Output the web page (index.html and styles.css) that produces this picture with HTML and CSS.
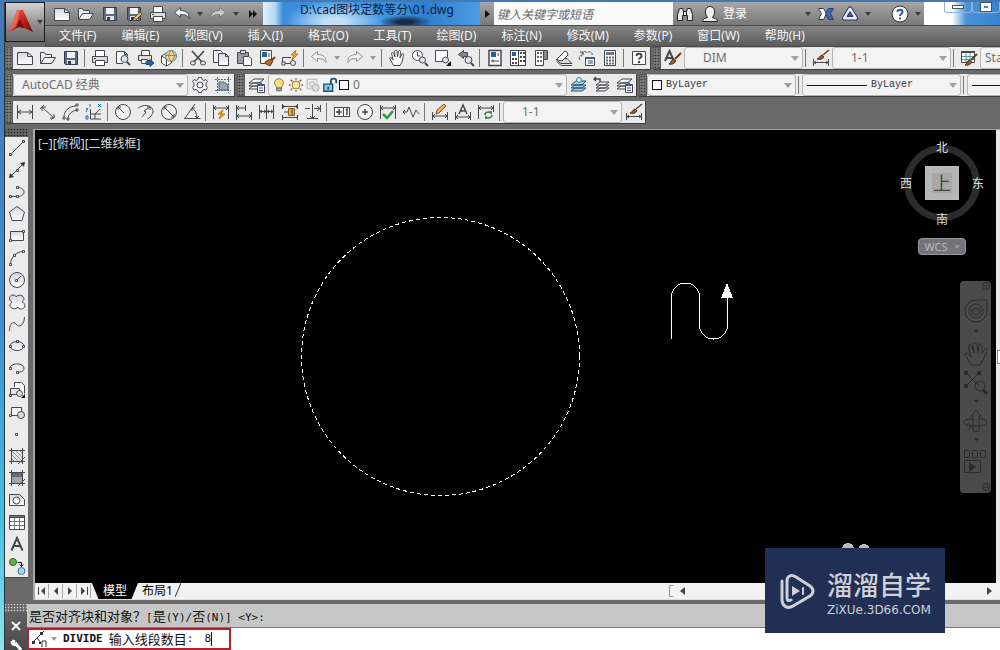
FILE: index.html
```html
<!DOCTYPE html>
<html lang="zh-CN">
<head>
<meta charset="utf-8">
<title>01.dwg</title>
<link rel="stylesheet" href="styles.css">
</head>
<body>
<svg class="defs" aria-hidden="true">
  <defs>
    <linearGradient id="g-red" x1="0" y1="0" x2="1" y2="1"><stop offset="0" stop-color="#f0705a"/><stop offset=".5" stop-color="#c8251c"/><stop offset="1" stop-color="#7c0d0a"/></linearGradient>
    <linearGradient id="g-paper" x1="0" y1="0" x2="0" y2="1"><stop offset="0" stop-color="#d4d7de"/><stop offset="1" stop-color="#ffffff"/></linearGradient>
    <symbol id="new" viewBox="0 0 18 18"><path fill="url(#g-paper)" d="M1.500 3.500h10l5 4v8h-15z"/><path d="M11.500 3.500v4h5"/></symbol>
    <symbol id="open" viewBox="0 0 18 18"><path fill="#eceef2" d="M1.500 14.500v-11h4l1 2h6v3M1.500 14.500l4-6h11l-4 6z"/></symbol>
    <symbol id="save" viewBox="0 0 18 18"><path fill="#5c6780" stroke="#333c50" d="M2.500 2.500h13v13h-12l-1-1z"/><path fill="#f4f4f4" stroke="none" d="M5 3h8v6H5z"/><path fill="#dfe3ea" stroke="none" d="M5 11h8v4H5z"/><path fill="#333c50" stroke="none" d="M6 12h3v3H6z"/></symbol>
    <symbol id="saveas" viewBox="0 0 18 18"><use href="#save"/><path fill="#e9b256" stroke="#6b4a1c" d="M8 16l1-3 6-6 2 2-6 6z"/></symbol>
    <symbol id="print" viewBox="0 0 18 18"><path fill="#fff" d="M4.500 7.500v-6h9v6"/><path fill="#d9dbe0" d="M1.500 7.500h15v6h-15z"/><path fill="#fff" d="M4.500 11.500h9v5h-9z"/><path d="M3 9.500h2"/></symbol>
    <symbol id="preview" viewBox="0 0 18 18"><path fill="#fff" d="M9 14.500H2.500v-12h8l3 3V7"/><path d="M10.500 2.500v3h3"/><circle cx="10.500" cy="10" r="3.500" fill="#dce6ee"/><path stroke-width="2" d="M13 13l3 3"/></symbol>
    <symbol id="publish" viewBox="0 0 18 18"><path fill="#fff" d="M4.500 6.500v-5h8v5"/><path fill="#d9dbe0" d="M1.500 6.500h13v5h-13z"/><path fill="#fff" d="M4.500 10.500h6v4h-6z"/><path fill="#1b66a8" stroke="#1b4f80" d="M9 12.500h4v-2l4 3.500-4 3.500v-2H9z"/></symbol>
    <symbol id="web" viewBox="0 0 18 18"><path fill="#fff" d="M1.500 7l5-3 5 3v7l-5 3-5-3zM1.500 7l5 3v7"/><circle cx="11" cy="7" r="5.500" fill="#f0d9a0" stroke="#57906a"/><path stroke="#c0763a" d="M11 2c-3 3-3 7 0 10M6 6.500h10"/><path stroke="#57906a" d="M12 2c3 3 3 7 0 10"/></symbol>
    <symbol id="cut" viewBox="0 0 18 18"><path stroke-width="1.600" d="M3 2l10 11M15 2L5 13"/><ellipse cx="4" cy="14" rx="2.500" ry="2"/><ellipse cx="14" cy="14" rx="2.500" ry="2"/></symbol>
    <symbol id="copy" viewBox="0 0 18 18"><path fill="#f4f4f4" d="M6 13.500H1.500v-12h7l2 2"/><path fill="url(#g-paper)" d="M6.500 4.500h7l3 3v9h-10z"/><path d="M13.500 4.500v3h3"/></symbol>
    <symbol id="paste" viewBox="0 0 18 18"><path fill="#9c9da3" d="M2.500 3.500h11v11h-11z"/><path fill="#ddd" d="M5.500 1.500h5v3h-5z"/><path fill="#fff" d="M8.500 7.500h5l3 2v7h-8z"/></symbol>
    <symbol id="match" viewBox="0 0 18 18"><path fill="#fff" d="M2.500 1.500h11v13h-11z"/><path fill="#29609b" stroke="none" d="M4 3h5v5H4z"/><path d="M11 4v4"/><path fill="#b86b25" stroke="#6d3c12" d="M7 13l5-3 3 2-3 5-4-2z"/><path stroke="#7a4418" stroke-width="2" d="M14 11l3-3"/></symbol>
    <symbol id="block" viewBox="0 0 18 18"><path d="M1.500 8.500H10M1.500 8.500v6h8"/><path fill="#fff" d="M1 13h3v3H1z"/><circle cx="12" cy="14" r="2.500"/><path fill="#f1a82e" stroke="#c97a10" d="M15 1l-5 5h3l-2 5 6-6h-3z"/></symbol>
    <symbol id="undo" viewBox="0 0 18 18"><path fill="#f3f3f3" d="M1.500 7.500l6-5v3c6 0 9 3 8.500 8-1.500-3-4-4-8.500-4v3z"/></symbol>
    <symbol id="redo" viewBox="0 0 18 18"><path fill="#f3f3f3" d="M16.500 7.500l-6-5v3c-6 0-9 3-8.500 8 1.500-3 4-4 8.500-4v3z"/></symbol>
    <symbol id="hand" viewBox="0 0 18 18"><path fill="#fff" d="M5.500 16.500L1.500 9c1-1 2-.5 3.500 2L3.500 4c1-1 2-.5 2.500 1l1 3-.500-6c1-1 2-1 2.500 0l.5 6 1-6c1-1 2 0 2 1l-.5 6 2-4c1-1 2 0 1.500 1.500L14 13l-2 3.500z"/></symbol>
    <symbol id="zoomrt" viewBox="0 0 18 18"><circle cx="6.500" cy="6.500" r="5" fill="#fff"/><path d="M6.500 3v4h3"/><circle cx="11.500" cy="11" r="3" fill="#e2e8ee"/><path stroke-width="2" d="M14 14l3 3"/></symbol>
    <symbol id="zoomwin" viewBox="0 0 18 18"><path fill="#fff" d="M1.500 1.500h12v11h-12z"/><circle cx="11.500" cy="11" r="3" fill="#dce3ea"/><path d="M14 14l2 2"/><path fill="#111" stroke="none" d="M17 12v5h-5z"/></symbol>
    <symbol id="zoomprev" viewBox="0 0 18 18"><path fill="#888" d="M1.500 5.500l5-4v2h4v4h-4v2z"/><circle cx="11.500" cy="11" r="3.500" fill="#dce3ea"/><path stroke-width="2" d="M14 14l3 3"/></symbol>
    <symbol id="props" viewBox="0 0 18 18"><path fill="#fff" stroke-width="1.500" d="M3 1.500h12v15H3z"/><path fill="#29609b" stroke="none" d="M5 3h5v5H5z"/><path d="M5 12h8M7 10.500v3M12 4v3"/></symbol>
    <symbol id="center" viewBox="0 0 18 18"><path fill="#fff" d="M1.500 1.500h15v15h-15z"/><path fill="#29609b" stroke="none" d="M3 3h4v4H3z"/><path stroke-width="2" stroke-dasharray="2 1" d="M3 10h5M3 14h5M11 4h5M11 8h5M11 12h5"/><path d="M9.500 2v14"/></symbol>
    <symbol id="palette" viewBox="0 0 18 18"><path fill="#fff" d="M3.500 1.500h8v15h-8z"/><path fill="#888" d="M11.500 1.500h4v9h-4z"/><path stroke="#666" stroke-width="2" stroke-dasharray="2 1" d="M5 4h5M5 8h5M5 12h5"/></symbol>
    <symbol id="sheets" viewBox="0 0 18 18"><path fill="#ddd" d="M1 10.500l5 4h11l-5-5z"/><path fill="#fff" d="M2 10l8-8 2 1 1 3-6 6-4-1z"/><path d="M2 12.500l4 4h11"/></symbol>
    <symbol id="markup" viewBox="0 0 18 18"><path stroke-dasharray="3 1" d="M2 11c-2-3 0-5 2-4-1-4 3-6 5-3 3-3 6 0 5 2"/><path fill="#fff" d="M7.500 8.500h9v8h-9z"/><path stroke="#29609b" stroke-width="2" d="M8 9h8"/><path d="M10 12h5M10 14h5M2 3h3v3"/></symbol>
    <symbol id="calc" viewBox="0 0 18 18"><path fill="#fff" d="M3.500 1.500h11v15h-11z"/><path fill="#6b7688" stroke="none" d="M5 3h8v3H5z"/><path stroke="#666" stroke-width="2" stroke-dasharray="2 1" d="M5 8.500h8M5 11.500h8M5 14.500h8"/></symbol>
    <symbol id="help" viewBox="0 0 18 18"><path fill="#fff" d="M2.500 2.500h13v13h-13z"/><path stroke-width="2" d="M6.500 7c0-3 5-3 5 0 0 2-2.500 2-2.500 3.500M9 12v2"/></symbol>
    <symbol id="brush" viewBox="0 0 18 18"><path fill="#9c5a2c" stroke="#5c3010" d="M5 15c2-1 2-4 4-5l3 2c-1 2-4 4-7 3z"/><path stroke="#6d3c12" stroke-width="2" d="M11 10l6-6"/></symbol>
    <symbol id="txtstyle" viewBox="0 0 18 18"><path stroke-width="2" d="M1 12L5.500 2 10 12M3 9h5"/><use href="#brush"/></symbol>
    <symbol id="dimstyle" viewBox="0 0 18 18"><path d="M1.500 10v7M16.500 10v7M2 13.500h14M4 12l-2 1.500L4 15M14 12l2 1.500-2 1.500"/><path fill="#9c5a2c" stroke="#5c3010" d="M5 10c2 0 3-4 5-4l2 2c-1 2-4 3-7 2z"/><path stroke="#6d3c12" stroke-width="1.500" d="M11 6l6-5"/></symbol>
    <symbol id="tblstyle" viewBox="0 0 18 18"><path fill="#fff" d="M1.500 2.500h13v11h-13z"/><path stroke-width="2" d="M1 3h14"/><path stroke="#5a93a8" d="M6 4v9M10 4v9M2 7.500h12M2 10.500h12"/><use href="#brush" y="1"/></symbol>
    <symbol id="gear" viewBox="0 0 18 18"><path fill="#f4f4f4" d="M7.500 1.500h3l.5 2 2 1 2-1 1.500 2-1.500 2v2.500l1.500 1.500-1.500 2.500-2-.5-2 1-.5 2h-3l-.5-2-2-1-2 .5L1.500 11.500 3 10V7.500l-1.500-2 1.500-2 2 1 2-1z"/><circle cx="9" cy="9" r="3"/></symbol>
    <symbol id="wsset" viewBox="0 0 18 18"><path stroke="#666" stroke-dasharray="2 1" d="M3.500 1v16M14.500 1v16M1 3.500h16M1 14.500h16"/><path fill="#98a4b4" stroke="#5c6675" d="M5 6h5l4 3v5H5z"/></symbol>
    <symbol id="layers" viewBox="0 0 18 18"><path fill="#f6f6f6" d="M1 13l4-3h9l-4 3zM1 10l4-3h9l-4 3zM1 7l5-4h10l-5 4z"/><path fill="#fff" d="M9.500 8.500h7v8h-7z"/><path stroke="#29609b" stroke-width="2" d="M10 9h6"/><path d="M11 12h4M11 14.500h4"/></symbol>
    <symbol id="layercur" viewBox="0 0 18 18"><path fill="#a4cfe0" stroke="#24506a" d="M1 15l4-3h11l-4 3zM1 12l4-3h11l-4 3zM1 9l5-4h10l-4 4z"/><circle cx="9" cy="4" r="2.500" fill="#d9f0f6" stroke="#3486a2"/></symbol>
    <symbol id="layerprev" viewBox="0 0 18 18"><path fill="#f6f6f6" d="M3 15l4-3h9l-4 3zM3 12l4-3h9l-4 3zM3 9l4-3h9l-4 3z"/><path stroke-width="1.500" d="M1 3h6v3M3 1L1 3l2 2"/></symbol>
    <symbol id="bulb" viewBox="0 0 18 18"><path fill="#f7df7c" stroke="#85743a" d="M6.500 12.500c0-2-2.500-3-2.500-6 0-6 10-6 10 0 0 3-2.500 4-2.500 6z"/><path fill="#c0c4cc" d="M6.500 12.500h5v3h-5z"/></symbol>
    <symbol id="sun" viewBox="0 0 18 18"><circle cx="9" cy="9" r="4.500" fill="#fbe3a0" stroke="#8a6c2a"/><path stroke="#8a6c2a" stroke-width="1.500" d="M9 1v2M9 15v2M1 9h2M15 9h2M3 3l2 2M13 13l2 2M15 3l-2 2M5 13l-2 2"/></symbol>
    <symbol id="vpfreeze" viewBox="0 0 18 18"><path stroke="#aaa" d="M2.500 2.500h11v5M2.500 2.500v11h5M5.500 5.500h5v5h-5z"/><circle cx="12" cy="12" r="4" fill="#ddd" stroke="#aaa"/></symbol>
    <symbol id="lock" viewBox="0 0 18 18"><path fill="#8fcbe8" stroke="#174f74" stroke-width="1.500" d="M2 8h10v8H2z"/><path stroke="#174f74" stroke-width="2" d="M10 8V4c0-3 6-3 6 0v3M7 11v3"/></symbol>
    <symbol id="d-lin" viewBox="0 0 18 18"><path d="M1.500 2v14M16.500 2v14M2 9h14M5 7L2 9l3 2M13 7l3 2-3 2"/></symbol>
    <symbol id="d-ali" viewBox="0 0 18 18"><path d="M1 6l4-4M12 17l4-4M3 4l12 11M3 8V4h4M11 15h4v-4"/></symbol>
    <symbol id="d-arc" viewBox="0 0 18 18"><path d="M2 14C2 8 7 3 14 3M6 16c0-5 4-8 9-9"/><path d="M14 1h2v2h-2zM14 6h2v2h-2zM1 14h2v2H1zM5 15h2v2H5z"/></symbol>
    <symbol id="d-ord" viewBox="0 0 18 18"><path d="M5.500 6v10H16M5 11h5l5-5M10 16v-5h6"/><path stroke="#1671a0" d="M5 1v3M13 1l3 3M16 1l-3 3M1 5l2 2M3 5L1 9M1 13h2v3H1z"/></symbol>
    <symbol id="d-rad" viewBox="0 0 18 18"><circle cx="9" cy="9" r="7.500" fill="#f2f2f2"/><path d="M4 4l6 6M4 7V4h3"/></symbol>
    <symbol id="d-jog" viewBox="0 0 18 18"><path d="M1.500 5c5-4 12-3 14 1s-2 8-5 10M5 14l4-5-2-1 6-4M10 4h3v3"/></symbol>
    <symbol id="d-dia" viewBox="0 0 18 18"><circle cx="9" cy="9" r="7.500" fill="#f2f2f2"/><path d="M4 4l10 10M4 7V4h3M11 14h3v-3"/></symbol>
    <symbol id="d-ang" viewBox="0 0 18 18"><path d="M12 1L1.500 15.500h16M9 5c3 2 5 5 5 10M9 8V5h3M12 13l2 2 2-2"/></symbol>
    <symbol id="d-quick" viewBox="0 0 18 18"><path d="M1.500 2v14M16.500 2v14M2 5h14M4 3L2 5l2 2M14 3l2 2-2 2"/><path fill="#f1a82e" stroke="#c97a10" d="M11 7l-5 4h3l-2 5 6-5H9z"/></symbol>
    <symbol id="d-base" viewBox="0 0 18 18"><path d="M1.500 2v15M10.500 2v6M16.500 9v8M2 5h8M2 13h14M4 3L2 5l2 2M4 11l-2 2 2 2M14 11l2 2-2 2"/></symbol>
    <symbol id="d-cont" viewBox="0 0 18 18"><path d="M1.500 2v14M8.500 2v14M15.500 2v14M2 8.500h13M4 7L2 8.500 4 10M6 7l2 1.500L6 10M11 7L9 8.500l2 1.500M13 7l2 1.500-2 1.500"/></symbol>
    <symbol id="d-space" viewBox="0 0 18 18"><path d="M1.500 1v5M16.500 1v5M2 3.500h14M1.500 12v5M16.500 12v5M2 14.500h14M3 2L2 3.500 3 5M15 2l1 1.500L15 5"/><path fill="#ecae48" stroke="#895d12" d="M7.500 5.500h6v7h-6z"/><path d="M3 9h4M10 7h2M10 9h2M10 11h2"/></symbol>
    <symbol id="d-break" viewBox="0 0 18 18"><path d="M1 5.500h5M10 5.500h6M16.500 2v7M8.500 1v14M3 15.500h11M13 3l3 2.500L13 8M6 13l2.500 2.500L11 13"/></symbol>
    <symbol id="d-tol" viewBox="0 0 18 18"><path fill="#fff" d="M1.500 4.500h15v9h-15zM10.500 4.500v9"/><path stroke-width="1.500" d="M3 9h6M6 6v6M13 7l1-1v6"/></symbol>
    <symbol id="d-center" viewBox="0 0 18 18"><circle cx="9" cy="9" r="7.500" fill="#f6f6f6"/><path stroke-width="1.500" d="M9 6v6M6 9h6"/></symbol>
    <symbol id="d-insp" viewBox="0 0 18 18"><path d="M1.500 2v14M16.500 2v14M2 5h14M4 3L2 5l2 2M14 3l2 2-2 2"/><path stroke="#32963b" stroke-width="2.500" d="M4 11l4 4 6-7"/></symbol>
    <symbol id="d-jogl" viewBox="0 0 18 18"><path d="M1 9h4l2-5 4 10 3-7 3 4M3 7L1 9l2 2"/></symbol>
    <symbol id="d-edit" viewBox="0 0 18 18"><path d="M1.500 9v8M16.500 9v8M2 13h14M4 11l-2 2 2 2M14 11l2 2-2 2"/><path fill="#f0b35b" stroke="#8d5417" d="M5 11l1-4 7-6 2 2-7 7z"/></symbol>
    <symbol id="d-tedit" viewBox="0 0 18 18"><path d="M1.500 9v8M16.500 9v8M2 14h14M4 12l-2 2 2 2M14 12l2 2-2 2"/><path stroke-width="1.500" d="M5 11l4-9 4 9M6.500 8h5"/></symbol>
    <symbol id="d-upd" viewBox="0 0 18 18"><path d="M1.500 2v14M16.500 2v7M2 5h14M4 3L2 5l2 2M14 3l2 2-2 2"/><path stroke="#2b7d34" stroke-width="1.500" d="M8 12c0-3 4-4 6-2V8M15 12c0 3-4 4-6 2v2"/></symbol>
    <symbol id="l-line" viewBox="0 0 18 18"><path d="M3 15L15 3"/><path fill="#fff" d="M1.500 14.500h2v2h-2zM14.500 1.500h2v2h-2z"/></symbol>
    <symbol id="l-xline" viewBox="0 0 18 18"><path d="M2 16L16 2"/><path fill="#333" stroke="none" d="M1 17l1-5 4 4zM17 1l-5 1 4 4z"/><path fill="#fff" d="M8.500 8.500h2v2h-2z"/></symbol>
    <symbol id="l-pline" viewBox="0 0 18 18"><path d="M2 13.500h8c8 0 8-9 0-9"/><path fill="#fff" d="M1.500 12.500h2v2h-2zM8.500 12.500h2v2h-2zM8.500 3.500h2v2h-2z"/></symbol>
    <symbol id="l-poly" viewBox="0 0 18 18"><path fill="url(#g-paper)" d="M9 1.500L16.500 7 14 15.500H4L1.500 7z"/></symbol>
    <symbol id="l-rect" viewBox="0 0 18 18"><path fill="url(#g-paper)" d="M2.500 4.500h13v9h-13z"/><path fill="#fff" d="M1.500 12.500h2v2h-2zM14.500 3.500h2v2h-2z"/></symbol>
    <symbol id="l-arc" viewBox="0 0 18 18"><path d="M2.500 15C3 8 8 3 15 2.500"/><path fill="#fff" d="M1.500 14.500h2v2h-2zM5.500 5.500h2v2h-2zM14.500 1.500h2v2h-2z"/></symbol>
    <symbol id="l-circle" viewBox="0 0 18 18"><circle cx="9" cy="9" r="7.500" fill="url(#g-paper)"/><path d="M9 9l4-4"/><path fill="#fff" d="M7.500 8.500h2v2h-2z"/></symbol>
    <symbol id="l-cloud" viewBox="0 0 18 18"><path fill="url(#g-paper)" d="M4 9C0 7 1 2 5 2c2 0 3 1 3 2 2-3 8-2 8 2 0 1-1 2-2 3 4 1 4 7-1 7-2 0-3-1-3-2-2 3-8 2-8-2 0-1 1-2 2-3z"/></symbol>
    <symbol id="l-spline" viewBox="0 0 18 18"><path d="M1.500 16C2 4 8 8 9 10s7 2 7.500-8"/></symbol>
    <symbol id="l-ell" viewBox="0 0 18 18"><ellipse cx="9" cy="9" rx="7" ry="4.500" fill="url(#g-paper)"/><path fill="#fff" d="M1.500 8.500h2v2h-2zM14.500 8.500h2v2h-2zM8.500 3.500h2v2h-2z"/></symbol>
    <symbol id="l-ella" viewBox="0 0 18 18"><path d="M2 9c0-5 13-6 14 0 0 4-4 4-6 4"/><path fill="#fff" d="M1.500 8.500h2v2h-2zM8.500 12.500h2v2h-2z"/></symbol>
    <symbol id="l-ins" viewBox="0 0 18 18"><path fill="#fff" d="M6.500 6V1.500h7l3 3v8"/><path fill="#e5e5e5" d="M2.500 7.500h9v6h-9z"/><circle cx="11.500" cy="12.500" r="3" fill="#ddd"/><path fill="#fff" d="M1.500 13.500h2v2h-2z"/><path fill="#111" stroke="none" d="M17 13v4h-4z"/></symbol>
    <symbol id="l-mkblk" viewBox="0 0 18 18"><path fill="#fafafa" d="M3.500 4.500h10v8h-10z"/><circle cx="13" cy="12" r="3.500" fill="#ddd"/><path fill="#fff" d="M1.500 11.500h2v2h-2z"/></symbol>
    <symbol id="l-pt" viewBox="0 0 18 18"><path fill="#fff" d="M7.500 8.500h2v2h-2z"/></symbol>
    <symbol id="l-hatch" viewBox="0 0 18 18"><path d="M3.500 1v16M14.500 1v16M1 3.500h16M1 14.500h16"/><path stroke="#7f88a4" d="M4 8l6 6M4 4l10 10M8 4l6 6M12 4l2 2M4 12l2 2"/><path d="M10 17l7-7"/></symbol>
    <symbol id="l-grad" viewBox="0 0 18 18"><path fill="#a0a4aa" stroke="none" d="M4 4h10v10H4z"/><path fill="#666b73" stroke="none" d="M4 4h10v4H4z"/><path d="M3.500 1v16M14.500 1v16M1 3.500h16M1 14.500h16M10 17l7-7"/></symbol>
    <symbol id="l-reg" viewBox="0 0 18 18"><path fill="url(#g-paper)" d="M1.500 3.500h10l5 5v6h-15z"/><circle cx="8.500" cy="9.500" r="3.500" fill="#fff"/></symbol>
    <symbol id="l-table" viewBox="0 0 18 18"><path fill="#fff" d="M1.500 2.500h15v14h-15z"/><path fill="#777" d="M1.500 2.500h15v2h-15z"/><path stroke="#777" d="M6.500 5v11M11.500 5v11M2 8.500h14M2 12.500h14"/></symbol>
    <symbol id="l-text" viewBox="0 0 18 18"><path stroke-width="2" d="M3.500 15.500L9 3l5.500 12.500M5.500 11h7"/></symbol>
    <symbol id="l-add" viewBox="0 0 18 18"><circle cx="5" cy="5" r="3.500" fill="#6aac48" stroke="#356b1f"/><circle cx="13.500" cy="14" r="3.500" fill="#a9d5f2" stroke="#3874a4"/><path stroke="#111" d="M9.500 5.500h4v4M11.500 7.500l2 2 2-2"/></symbol>
    <symbol id="bino" viewBox="0 0 18 18"><path fill="#e8e8e8" stroke="#222" d="M1.500 15.500v-6l2-6h3l1 3h3l1-3h3l2 6v6h-5v-5h-5v5z"/><path stroke="#222" d="M7.500 6v5M10.500 6v5"/></symbol>
    <symbol id="user" viewBox="0 0 18 18"><path fill="#eee" stroke="#222" d="M1.500 16.500c0-3 3-3 5-4C3 8 4 1.500 9 1.500S15 8 11.500 12.500c2 1 5 1 5 4z"/></symbol>
    <symbol id="exch" viewBox="0 0 18 18"><path fill="#fff" stroke="#333d58" d="M1.500 3.500h5l3 5-3 6h-5l3-6z"/><path fill="#3c68ae" stroke="#223f75" d="M16.500 3.500h-5l-3 5 3 6h5l-3-6z"/></symbol>
    <symbol id="a360" viewBox="0 0 18 18"><path stroke="#2d3c60" stroke-width="5" stroke-linejoin="round" d="M9 4l5.500 9h-11z"/><path stroke="#e3eaf8" stroke-width="3" stroke-linejoin="round" d="M9 4l5.500 9h-11z"/><path stroke="#2d3c60" d="M9 6.500l3 5H6z"/></symbol>
    <symbol id="helpc" viewBox="0 0 18 18"><circle cx="9" cy="9" r="8" fill="#fff" stroke="#333"/><path stroke="#2360a8" stroke-width="2" d="M6.500 7c0-3 5-3 5 0 0 2-2.500 2-2.500 4M9 12.500v2"/></symbol>
  </defs>
</svg>

<div class="desktop">
<div class="app">
  <header class="head">
    <button class="appbtn" aria-label="应用程序菜单">
      <svg width="26" height="28" viewBox="0 0 26 28"><path fill="url(#g-red)" d="M9 2h6l10 22-9-4-5-1-10 5z"/><path fill="#7c0d0a" d="M12 11l4 9-5-1-3 1z"/><path fill="#f58a70" d="M9 2h3L8 18l-7 6z" opacity=".6"/></svg>
      <i class="caret"></i>
    </button>
    <div class="headrows">
      <div class="titlebar">
        <div class="qat">
          <button class="tb" aria-label="新建"><svg><use href="#new"/></svg></button>
          <button class="tb" aria-label="打开"><svg><use href="#open"/></svg></button>
          <button class="tb" aria-label="保存"><svg><use href="#save"/></svg></button>
          <button class="tb" aria-label="另存为"><svg><use href="#saveas"/></svg></button>
          <button class="tb" aria-label="打印"><svg><use href="#print"/></svg></button>
          <button class="tb" aria-label="放弃"><svg><use href="#undo"/></svg></button>
          <button class="drop" aria-label="放弃列表"><i class="caret"></i></button>
          <button class="tb dim" aria-label="重做"><svg><use href="#redo"/></svg></button>
          <button class="drop" aria-label="重做列表"><i class="caret"></i></button>
          <button class="more" aria-label="更多"><svg width="8" height="8" viewBox="0 0 8 8"><path d="M0 0l4 4-4 4zM4 0l4 4-4 4z"/></svg></button>
        </div>
        <h1 class="title">D:\cad图块定数等分\01.dwg</h1>
        <button class="more next" aria-label="展开"><svg width="5" height="8" viewBox="0 0 5 8"><path d="M0 0l5 4-5 4z"/></svg></button>
        <input class="search" type="text" aria-label="搜索" placeholder="键入关键字或短语">
        <div class="info">
          <button class="tb" aria-label="查找"><svg><use href="#bino"/></svg></button>
          <button class="login"><svg><use href="#user"/></svg>登录</button>
          <button class="drop push" aria-label="登录选项"><i class="caret"></i></button>
          <button class="tb" aria-label="Exchange"><svg><use href="#exch"/></svg></button>
          <button class="tb" aria-label="A360"><svg><use href="#a360"/></svg></button>
          <button class="drop" aria-label="A360 选项"><i class="caret"></i></button>
          <button class="tb helpbtn" aria-label="帮助"><svg><use href="#helpc"/></svg></button>
          <button class="drop" aria-label="帮助选项"><i class="caret"></i></button>
        </div>
        <div class="winctl">
          <button aria-label="最小化"><i class="min"></i></button>
          <button aria-label="最大化"><i class="max"></i></button>
        </div>
      </div>
      <nav class="menu">
        <button>文件(F)</button><button>编辑(E)</button><button>视图(V)</button><button>插入(I)</button><button>格式(O)</button><button>工具(T)</button><button>绘图(D)</button><button>标注(N)</button><button>修改(M)</button><button>参数(P)</button><button>窗口(W)</button><button>帮助(H)</button>
      </nav>
    </div>
  </header>

  <div class="bars">
    <div class="row">
      <div class="bar">
        <i class="grip"></i>
        <button class="tb" aria-label="新建"><svg><use href="#new"/></svg></button>
        <button class="tb" aria-label="打开"><svg><use href="#open"/></svg></button>
        <button class="tb" aria-label="保存"><svg><use href="#save"/></svg></button>
        <i class="sep"></i>
        <button class="tb" aria-label="打印"><svg><use href="#print"/></svg></button>
        <button class="tb" aria-label="打印预览"><svg><use href="#preview"/></svg></button>
        <button class="tb" aria-label="发布"><svg><use href="#publish"/></svg></button>
        <button class="tb" aria-label="三维打印"><svg><use href="#web"/></svg></button>
        <i class="sep"></i>
        <button class="tb" aria-label="剪切"><svg><use href="#cut"/></svg></button>
        <button class="tb" aria-label="复制"><svg><use href="#copy"/></svg></button>
        <button class="tb" aria-label="粘贴"><svg><use href="#paste"/></svg></button>
        <button class="tb" aria-label="特性匹配"><svg><use href="#match"/></svg></button>
        <button class="tb" aria-label="块编辑器"><svg><use href="#block"/></svg></button>
        <i class="sep"></i>
        <button class="tb dim" aria-label="放弃"><svg><use href="#undo"/></svg></button>
        <button class="drop" aria-label="放弃列表"><i class="caret pale"></i></button>
        <button class="tb dim" aria-label="重做"><svg><use href="#redo"/></svg></button>
        <button class="drop" aria-label="重做列表"><i class="caret pale"></i></button>
        <i class="sep"></i>
        <button class="tb" aria-label="平移"><svg><use href="#hand"/></svg></button>
        <button class="tb" aria-label="实时缩放"><svg><use href="#zoomrt"/></svg></button>
        <button class="tb" aria-label="窗口缩放"><svg><use href="#zoomwin"/></svg></button>
        <button class="tb" aria-label="缩放上一个"><svg><use href="#zoomprev"/></svg></button>
        <i class="sep"></i>
        <button class="tb" aria-label="特性"><svg><use href="#props"/></svg></button>
        <button class="tb" aria-label="设计中心"><svg><use href="#center"/></svg></button>
        <button class="tb" aria-label="工具选项板"><svg><use href="#palette"/></svg></button>
        <button class="tb" aria-label="图纸集"><svg><use href="#sheets"/></svg></button>
        <button class="tb" aria-label="标记集"><svg><use href="#markup"/></svg></button>
        <button class="tb" aria-label="计算器"><svg><use href="#calc"/></svg></button>
        <i class="sep"></i>
        <button class="tb" aria-label="帮助"><svg><use href="#help"/></svg></button>
      </div>
      <div class="bar">
        <i class="grip"></i>
        <button class="tb" aria-label="文字样式"><svg><use href="#txtstyle"/></svg></button>
        <label class="combo w119"><select aria-label="文字样式"><option>DIM</option></select></label>
        <i class="sep"></i>
        <button class="tb" aria-label="标注样式"><svg><use href="#dimstyle"/></svg></button>
        <label class="combo w119"><select aria-label="标注样式"><option>1-1</option></select></label>
        <i class="sep"></i>
        <button class="tb" aria-label="表格样式"><svg><use href="#tblstyle"/></svg></button>
        <label class="combo w119 tight"><select aria-label="表格样式"><option>Standard</option></select></label>
      </div>
    </div>

    <div class="row">
      <div class="bar">
        <i class="grip"></i>
        <label class="combo w175"><select aria-label="工作空间"><option>AutoCAD 经典</option></select></label>
        <button class="tb" aria-label="工作空间设置"><svg><use href="#gear"/></svg></button>
        <button class="tb" aria-label="我的工作空间"><svg><use href="#wsset"/></svg></button>
      </div>
      <div class="bar">
        <i class="grip"></i>
        <button class="tb" aria-label="图层特性"><svg><use href="#layers"/></svg></button>
        <label class="combo w299">
          <span class="states"><svg><use href="#bulb"/></svg><svg><use href="#sun"/></svg><svg><use href="#vpfreeze"/></svg><svg><use href="#lock"/></svg><i class="swatch"></i></span>
          <select aria-label="图层"><option>0</option></select>
        </label>
        <button class="tb" aria-label="置为当前"><svg><use href="#layercur"/></svg></button>
        <button class="tb" aria-label="上一个图层"><svg><use href="#layerprev"/></svg></button>
        <button class="tb" aria-label="图层状态"><svg><use href="#layers"/></svg></button>
      </div>
      <div class="bar">
        <i class="grip"></i>
        <label class="combo w149 mono"><i class="swatch"></i><select aria-label="颜色"><option>ByLayer</option></select></label>
        <i class="sep"></i>
        <label class="combo w159 mono"><i class="rule"></i><select aria-label="线型"><option>ByLayer</option></select></label>
        <i class="sep"></i>
        <label class="combo w159 mono"><i class="rule"></i><select aria-label="线宽"><option>ByLayer</option></select></label>
      </div>
    </div>

    <div class="row">
      <div class="bar">
        <i class="grip"></i>
        <button class="tb" aria-label="线性"><svg><use href="#d-lin"/></svg></button>
        <button class="tb" aria-label="对齐"><svg><use href="#d-ali"/></svg></button>
        <button class="tb" aria-label="弧长"><svg><use href="#d-arc"/></svg></button>
        <button class="tb" aria-label="坐标"><svg><use href="#d-ord"/></svg></button>
        <i class="sep"></i>
        <button class="tb" aria-label="半径"><svg><use href="#d-rad"/></svg></button>
        <button class="tb" aria-label="折弯"><svg><use href="#d-jog"/></svg></button>
        <button class="tb" aria-label="直径"><svg><use href="#d-dia"/></svg></button>
        <button class="tb" aria-label="角度"><svg><use href="#d-ang"/></svg></button>
        <i class="sep"></i>
        <button class="tb" aria-label="快速标注"><svg><use href="#d-quick"/></svg></button>
        <button class="tb" aria-label="基线"><svg><use href="#d-base"/></svg></button>
        <button class="tb" aria-label="连续"><svg><use href="#d-cont"/></svg></button>
        <button class="tb" aria-label="等距标注"><svg><use href="#d-space"/></svg></button>
        <button class="tb" aria-label="折断标注"><svg><use href="#d-break"/></svg></button>
        <i class="sep"></i>
        <button class="tb" aria-label="公差"><svg><use href="#d-tol"/></svg></button>
        <button class="tb" aria-label="圆心标记"><svg><use href="#d-center"/></svg></button>
        <button class="tb" aria-label="检验"><svg><use href="#d-insp"/></svg></button>
        <button class="tb" aria-label="折弯线性"><svg><use href="#d-jogl"/></svg></button>
        <i class="sep"></i>
        <button class="tb" aria-label="编辑标注"><svg><use href="#d-edit"/></svg></button>
        <button class="tb" aria-label="编辑标注文字"><svg><use href="#d-tedit"/></svg></button>
        <button class="tb" aria-label="标注更新"><svg><use href="#d-upd"/></svg></button>
        <i class="sep"></i>
        <label class="combo w119"><select aria-label="当前标注样式"><option>1-1</option></select></label>
        <button class="tb" aria-label="标注样式"><svg><use href="#dimstyle"/></svg></button>
      </div>
    </div>
  </div>

  <main class="work">
    <div class="draw">
      <i class="hgrip"></i>
      <button class="tb" aria-label="直线"><svg><use href="#l-line"/></svg></button>
      <button class="tb" aria-label="构造线"><svg><use href="#l-xline"/></svg></button>
      <button class="tb" aria-label="多段线"><svg><use href="#l-pline"/></svg></button>
      <button class="tb" aria-label="多边形"><svg><use href="#l-poly"/></svg></button>
      <button class="tb" aria-label="矩形"><svg><use href="#l-rect"/></svg></button>
      <button class="tb" aria-label="圆弧"><svg><use href="#l-arc"/></svg></button>
      <button class="tb" aria-label="圆"><svg><use href="#l-circle"/></svg></button>
      <button class="tb" aria-label="修订云线"><svg><use href="#l-cloud"/></svg></button>
      <button class="tb" aria-label="样条曲线"><svg><use href="#l-spline"/></svg></button>
      <button class="tb" aria-label="椭圆"><svg><use href="#l-ell"/></svg></button>
      <button class="tb" aria-label="椭圆弧"><svg><use href="#l-ella"/></svg></button>
      <button class="tb" aria-label="插入块"><svg><use href="#l-ins"/></svg></button>
      <button class="tb" aria-label="创建块"><svg><use href="#l-mkblk"/></svg></button>
      <button class="tb" aria-label="点"><svg><use href="#l-pt"/></svg></button>
      <button class="tb" aria-label="图案填充"><svg><use href="#l-hatch"/></svg></button>
      <button class="tb" aria-label="渐变色"><svg><use href="#l-grad"/></svg></button>
      <button class="tb" aria-label="面域"><svg><use href="#l-reg"/></svg></button>
      <button class="tb" aria-label="表格"><svg><use href="#l-table"/></svg></button>
      <button class="tb" aria-label="多行文字"><svg><use href="#l-text"/></svg></button>
      <button class="tb" aria-label="添加选定对象"><svg><use href="#l-add"/></svg></button>
    </div>

    <div class="view">
      <div class="viewmain">
        <div class="canvas">
          <svg class="drawing" aria-label="图形">
            <circle cx="405.500" cy="226.500" r="139" stroke-dasharray="4 3"/>
            <path d="M636.500 209v-42a14 14 0 0 1 28 0v28a14 14 0 0 0 28 0v-30"/>
            <path class="solid" d="M692 153l6 15h-12z"/>
            <circle class="fog" cx="813" cy="419" r="6"/><circle class="fog" cx="829" cy="420" r="6"/>
          </svg>
          <p class="vplabel">[−][俯视][二维线框]</p>
          <div class="cube">
            <span class="n">北</span><span class="w">西</span><b class="top">上</b><span class="e">东</span><span class="s">南</span>
          </div>
          <button class="wcs">WCS<i class="caret"></i></button>
          <div class="navbar">
            <svg width="31" height="212" viewBox="0 0 31 212">
              <circle cx="26" cy="5" r="3.500"/><path d="M24 5h4"/>
              <path d="M5 30a11 11 0 0 1 11-11h11v11a11 11 0 0 1-22 0z"/><circle cx="16" cy="30" r="7"/><path d="M12 28h8v3l-2 3h-4l-2-3z"/>
              <path class="f" d="M14 49h5l-2.500 3zM14 119h5l-2.500 3zM14 157h5l-2.500 3z"/>
              <path d="M11 84L5 73c2-2 4 0 6 3L8 65c1-2 3-1 4 1l2 6-1-9c1-2 3-1 4 0l1 9 1-8c1-2 3-1 3 1v8l3-5c1-2 3 0 2 2l-4 9-3 5z"/>
              <path class="f" d="M4 90h4v4H4zM17 90h4v4h-4zM4 103h4v4H4z"/><path d="M6 92l13 13M19 92L6 105"/><circle cx="20" cy="105" r="5"/><path stroke-width="3" d="M23 109l4 4"/>
              <path d="M13 150v-15h-2l5-6 5 6h-2v15z"/><path d="M13 138c-12-1-12 7-1 7h8c9 0 9-8 0-7M8 142l4 3-4 4"/>
              <path d="M4.500 169.500h5v7h-5zM12.500 169.500h5v7h-5zM20.500 169.500h5v7h-5zM4.500 179.500h16v12h-16z"/><path class="f" d="M9 181l7 5-7 5z"/>
              <circle cx="26" cy="206" r="3.500"/><path d="M24 206h4"/>
            </svg>
          </div>
        </div>
        <div class="vscroll"><i></i></div>
      </div>
      <div class="tabs">
        <div class="tabnav">
          <button aria-label="第一个"><svg width="10" height="8" viewBox="0 0 10 8"><path d="M1 0h1v8H1zM8 0v8L4 4z"/></svg></button>
          <button aria-label="上一个"><svg width="10" height="8" viewBox="0 0 10 8"><path d="M7 0v8L3 4z"/></svg></button>
          <button aria-label="下一个"><svg width="10" height="8" viewBox="0 0 10 8"><path d="M3 0v8l4-4z"/></svg></button>
          <button aria-label="最后一个"><svg width="10" height="8" viewBox="0 0 10 8"><path d="M8 0h1v8H8zM2 0v8l4-4z"/></svg></button>
        </div>
        <button class="tab on">模型</button>
        <button class="tab">布局1</button>
        <svg class="slash" width="6" height="14" viewBox="0 0 6 14"><path d="M0 14L6 0"/></svg>
        <div class="hscroll">
          <i class="split"></i>
          <svg width="5" height="8" viewBox="0 0 5 8"><path d="M5 0v8L0 4z"/></svg>
          <svg class="right" width="5" height="8" viewBox="0 0 5 8"><path d="M0 0v8l5-4z"/></svg>
        </div>
      </div>
    </div>
  </main>

  <section class="cmd">
    <div class="cmdside">
      <i class="hgrip"></i>
      <button aria-label="关闭"><svg width="10" height="10" viewBox="0 0 10 10"><path stroke="#fff" stroke-width="2" d="M1 1l8 8M9 1L1 9"/></svg></button>
      <button aria-label="自定义"><svg width="12" height="12" viewBox="0 0 12 12"><path stroke="#fff" stroke-width="3" d="M2 2c0 4 3 4 4 3l5 6M2 2l3 1"/></svg></button>
    </div>
    <div class="cmdmain">
      <p class="history">是否对齐块和对象？<span>[</span>是<span>(Y)/</span>否<span>(N)] &lt;Y&gt;:</span></p>
      <label class="prompt">
        <svg width="18" height="18" viewBox="0 0 18 18"><path stroke="#333" d="M2 12L13 1M6 8l4 5M11 17v-6h4v6"/><path fill="#333" stroke="none" d="M1 11h3v3H1zM9 2h3v3H9zM8 12h2v2H8z"/></svg>
        <i class="caret pale"></i>
        <b>DIVIDE</b>输入线段数目<span>:</span>
        <input type="text" value="8" aria-label="线段数目">
      </label>
    </div>
  </section>

  <aside class="mark">
    <svg width="36" height="38" viewBox="0 0 36 38"><path stroke-width="3" d="M3 9v18c0 8 6 10 11 7l17-10c4-3 4-7 0-10L17 5c-5-3-9-1-9 4v17c0 3 2 3 4 2"/><path class="f" d="M13 14l8 5-8 5z"/><path stroke-width="2" d="M24 16v6"/></svg>
    <div class="words"><strong>溜溜自学</strong><small>ZiXUe.3D66.COM</small></div>
  </aside>
</div>
</div>
</body>
</html>
```

FILE: styles.css
```css
*, ::before, ::after { box-sizing: border-box; }
body { margin: 0; font: 12px/16px "Noto Sans", "Noto Sans CJK SC", sans-serif; overflow: hidden; }
button { margin: 0; padding: 0; border: 0; background: none; font: inherit; color: inherit; display: flex; align-items: center; justify-content: center; flex: none; }
h1, p { margin: 0; font: inherit; white-space: nowrap; }
svg { fill: none; stroke: #44474e; flex: none; display: block; }
i { display: block; flex: none; }
.defs { position: absolute; width: 0; height: 0; }

.desktop { height: 100vh; padding: 2px 0 0 4px; background: linear-gradient(#4478b0, #3f8fd0 50%, #45c0e0 80%, #8fe4ee); }
.app { position: relative; height: 100%; display: flex; flex-direction: column; background: #696969; border-left: 1px solid #2c3540; overflow: hidden; }

.caret { width: 0; height: 0; border: 3px solid transparent; border-top: 4px solid #3c3c3c; border-bottom: 0; }
.caret.pale { border-top-color: #9a9a9a; }
.tb { width: 23px; height: 22px; }
.tb svg { width: 18px; height: 18px; }
.tb.dim svg { stroke: #8f8f8f; }
.drop { width: 13px; height: 22px; }

/* Header */
.head { display: flex; height: 45px; flex: none; }
.appbtn { width: 40px; height: 40px; gap: 3px; border: 1px solid #1c1c1c; background: linear-gradient(#d4d4d4, #8a8a8a 60%, #6b6b6b); }
.appbtn svg { stroke: none; }
.headrows { flex: 1; min-width: 0; display: flex; flex-direction: column; }
.titlebar { display: flex; height: 24px; border-bottom: 1px solid #4a4a4a; }
.qat, .next, .info { background: linear-gradient(#a6a6a6, #787878); }
.qat { display: flex; align-items: center; padding-left: 5px; width: 218px; flex: none; }
.qat .tb { width: 24px; }
.qat .drop { width: 12px; }
.qat .dim svg { stroke: #6a6a6a; opacity: .6; }
.more svg { fill: #111; stroke: none; }
.more { flex: 1; }
.title { flex: 0 0 217px; padding-left: 37px; line-height: 15px; color: #0c1c38;
  background: radial-gradient(ellipse 26px 7px at 142px 20px, #1b2c48 30%, transparent), radial-gradient(ellipse 50px 22px at 72px 20px, #c2e1f6 20%, transparent), linear-gradient(90deg, #dff0fb, #b4daf5 12px, #3a8edc 20px, #3b94e2 60%, #2f7ecc 75%, #4c9be6); }
.next { flex: none; width: 14px; }
.search { flex: 0 0 179px; min-width: 0; border: 0; border-radius: 0; padding: 4px 3px 2px; background: #fafafa; font: italic 12px/16px "Noto Sans", "Noto Sans CJK SC", sans-serif; height: 23px; }
.search::placeholder { color: #666; opacity: 1; }
.info { display: flex; align-items: center; width: 251px; flex: none; color: #fff; }
.info .drop { width: 12px; }
.info .push { margin-left: auto; }
.info .helpbtn { margin-left: 14px; }
.info .tb { width: 24px; }
.login { gap: 4px; margin-left: 4px; }
.login svg { width: 18px; height: 18px; }
.winctl { flex: 1; display: flex; justify-content: flex-end; align-items: flex-start; background: linear-gradient(90deg, #fff 28px, #4a93da 42px, #3583d0); }
.winctl button { width: 28px; height: 11px; border: 1px solid #8ab4dc; border-top: 0; border-radius: 0 0 3px 3px; }
.min { width: 12px; height: 4px; background: #fff; border: 1px solid #456; }
.max { width: 10px; height: 8px; border: 3px solid #fff; outline: 1px solid #456; }
.menu { flex: 1; display: flex; align-items: center; gap: 25px; padding-left: 14px; color: #f4f4f4; background: linear-gradient(#868686, #5a5a5a); border-bottom: 1px solid #4a4a4a; white-space: nowrap; }

/* Toolbars */
.bars { display: flex; flex-direction: column; gap: 4px; padding-bottom: 5px; flex: none; }
.row { display: flex; gap: 2px; }
.bar { display: flex; align-items: center; height: 23px; flex: none; background: #ebebeb; border-bottom: 1px solid #3f3f3f; border-right: 1px solid #3f3f3f; }
.grip { width: 8px; height: 22px; background: radial-gradient(circle, #333 40%, transparent 50%) 0 0 / 3px 3px, #7c7c7c; border: 1px solid #5a5a5a; }
.sep { width: 6px; height: 18px; border-right: 3px solid transparent; border-left: 2px solid transparent; background: #777 padding-box; }
.combo { display: flex; align-items: center; height: 22px; flex: none; position: relative; background: #f3f3f3; border: 1px solid #b4b4b4; border-radius: 3px; color: #6d6d6d; padding-right: 3px; }
.combo::after { content: ""; border: 4px solid transparent; border-top: 5px solid #a0a0a0; border-bottom: 0; }
.combo select { appearance: none; flex: 1; min-width: 0; height: 20px; border: 0; background: none; color: inherit; font: 12px/18px "Noto Sans", "Noto Sans CJK SC", sans-serif; padding: 0 0 0 18px; }
.combo.tight select { padding-left: 4px; }
.combo .states + select, .combo.mono select { padding-left: 4px; }
.combo.mono select { font: 10px/18px "Liberation Mono", monospace; color: #333; }
.w119 { width: 119px; }
.w149 { width: 149px; }
.w159 { width: 159px; }
.w175 { width: 175px; }
.w175 select { padding-left: 8px; }
.w299 { width: 299px; }
.states { display: flex; align-items: center; gap: 1px; padding-left: 2px; }
.states svg { width: 16px; height: 16px; }
.swatch { width: 10px; height: 10px; border: 1px solid #111; background: #fff; }
.mono .swatch { margin-left: 4px; }
.rule { width: 60px; height: 1px; margin-left: 4px; background: #111; }

/* Work area */
.work { flex: 1; min-height: 0; display: flex; gap: 5px; }
.draw { width: 23px; flex: none; align-self: flex-start; background: #ebebeb; border-bottom: 1px solid #444; }
.hgrip { width: 100%; height: 8px; background: radial-gradient(circle, #222 40%, transparent 50%) 2px 2px / 3px 3px, #686868; }
.view { flex: 1; min-width: 0; display: flex; flex-direction: column; border-top: 1px solid #a8a8a8; border-left: 2px solid #a8a8a8; }
.viewmain { flex: 1; min-height: 0; display: flex; }
.canvas { flex: 1; min-width: 0; position: relative; background: #000; overflow: hidden; color: #dcdcdc; }
.drawing { position: absolute; width: 100%; height: 100%; stroke: #fff; shape-rendering: crispEdges; }
.drawing .solid { fill: #fff; stroke: none; }
.drawing .fog { fill: #bbb; stroke: none; }
.vplabel { position: absolute; left: 3px; top: 6px; font-size: 12px; }
.cube { position: absolute; right: 12px; top: 10px; width: 85px; height: 88px; }
.cube::before { content: ""; position: absolute; left: 5px; top: 5px; width: 76px; height: 76px; border: 7px solid #2c2c2c; border-radius: 50%; }
.cube span { position: absolute; }
.cube .n { left: 37px; top: 0; }
.cube .s { left: 37px; top: 72px; }
.cube .w { left: 1px; top: 36px; }
.cube .e { right: 0; top: 36px; }
.cube .top { position: absolute; left: 26px; top: 26px; width: 34px; height: 34px; background: #a8a8a8; border: 1px solid #bbb; box-shadow: inset 0 0 0 6px #b6b6b6; color: #444; font: 18px/30px "Noto Sans CJK SC", sans-serif; text-align: center; }
.wcs { position: absolute; right: 30px; top: 108px; width: 48px; height: 17px; gap: 6px; border: 1px solid #999; border-radius: 4px; background: #73737a; color: #b9b9b9; font-size: 11px; }
.wcs .caret { border-top-color: #999; }
.navbar { position: absolute; right: 5px; top: 151px; border-radius: 4px; background: #4a4a4a; }
.navbar svg { stroke: #2a2a2a; }
.navbar .f { fill: #2a2a2a; stroke: none; }
.vscroll { width: 4px; flex: none; background: #e8e8e8; display: flex; align-items: center; justify-content: flex-end; }
.vscroll i { width: 3px; height: 14px; border: 1px solid #888; border-right: 0; background: #fff; }

/* Layout tabs */
.tabs { flex: none; display: flex; height: 17px; background: #f2f2f2; border-bottom: 1px solid #ddd; color: #000; }
.tabnav { display: flex; align-items: center; width: 57px; flex: none; }
.tabnav button { width: 14px; height: 14px; border-right: 1px solid #aaa; }
.tabnav svg, .hscroll svg { fill: #444; stroke: none; }
.tab { padding: 0 2px 0 4px; }
.tab.on { width: 46px; padding: 0 4px; color: #fff; background: #000; clip-path: polygon(0 0, 100% 0, 86% 100%, 14% 100%); }
.slash { stroke: #333; }
.hscroll { flex: 1; display: flex; align-items: center; gap: 6px; padding-left: 488px; padding-right: 8px; }
.hscroll .right { margin-left: auto; }
.split { width: 5px; height: 12px; border: 1px solid #999; border-right-color: transparent; }

/* Command line */
.cmd { display: flex; flex: none; margin-top: 4px; height: 46px; }
.cmdside { width: 22px; flex: none; display: flex; flex-direction: column; align-items: center; gap: 9px; background: linear-gradient(#666, #4a4a4a); }
.cmdside .hgrip { background: radial-gradient(circle, #ccc 35%, transparent 50%) 2px 2px / 3px 3px, #6a6a6a; }
.cmdside button { width: 100%; height: 10px; }
.cmdmain { flex: 1; min-width: 0; background: #fff; color: #111; font: 13px/20px "Noto Sans CJK SC", sans-serif; }
.cmdmain span, .cmdmain b, .prompt input { font: 11px/18px "DejaVu Sans Mono", monospace; }
.cmdmain b { font-weight: 700; margin-right: 6px; }
.history { padding: 2px; height: 24px; background: #c6c6c6; border-bottom: 1px solid #777; }
.prompt { display: flex; align-items: center; width: 204px; height: 22px; border: 2px solid #b4202c; padding-left: 2px; white-space: nowrap; }
.prompt .caret { margin: 0 6px 0 2px; }
.prompt input { flex: 1; min-width: 0; border: 0; padding: 0 0 0 11px; background: linear-gradient(#111, #111) 18px 50% / 1px 14px no-repeat; color: #111; }

.mark { position: absolute; right: 55px; bottom: 17px; width: 180px; height: 85px; padding: 0 14px; display: flex; align-items: center; justify-content: space-between; background: #222f55; color: #ced0d6; }
.mark svg { stroke: #ced0d6; stroke-linecap: round; }
.mark .f { fill: #ced0d6; stroke: none; }
.words { display: flex; flex-direction: column; }
.mark strong, .mark small { display: block; white-space: nowrap; }
.mark strong { font: 500 26px/38px "Noto Sans CJK SC", sans-serif; }
.mark small { font: 12px/14px "DejaVu Sans", sans-serif; }
```
